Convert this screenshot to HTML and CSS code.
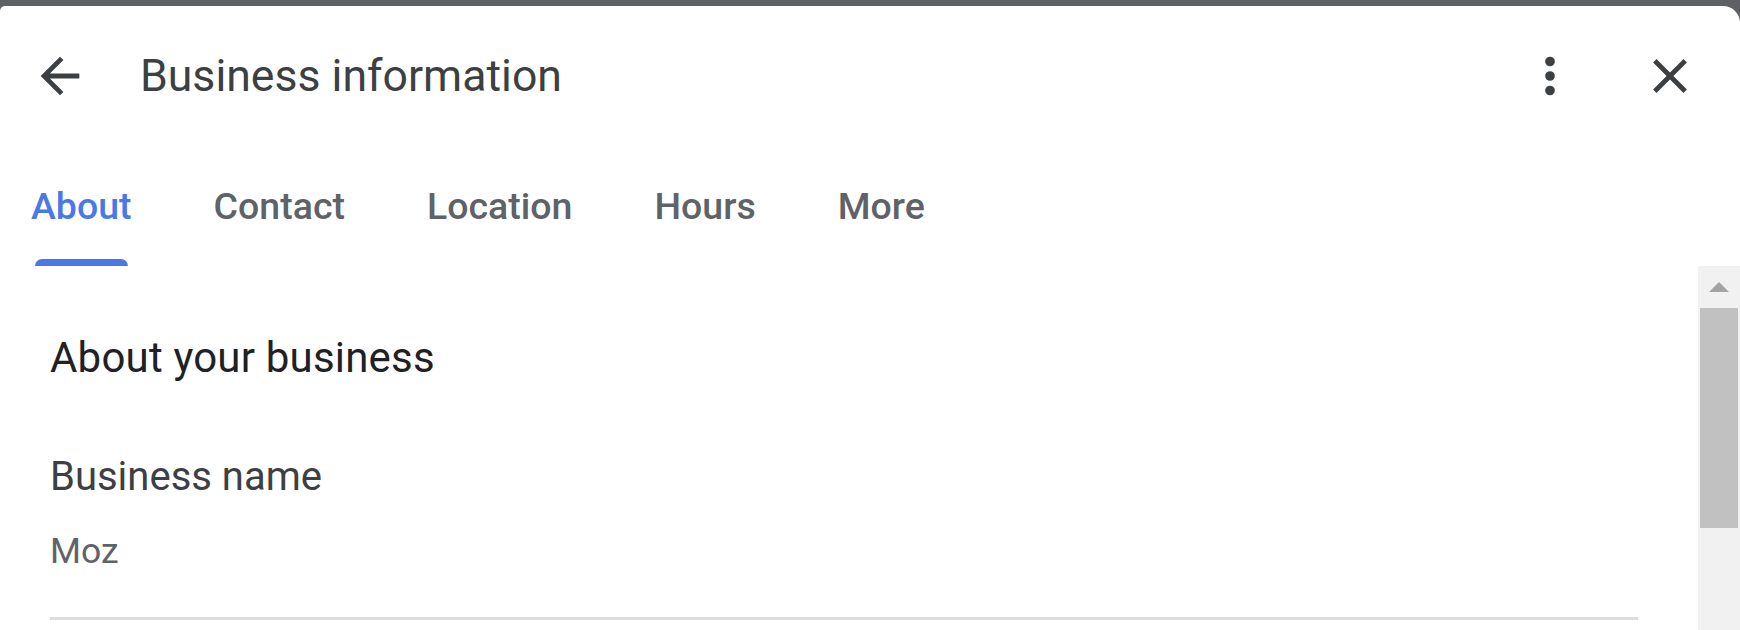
FILE: index.html
```html
<!DOCTYPE html>
<html lang="en">
  <head>
    <meta charset="UTF-8" />
    <meta name="viewport" content="width=device-width, initial-scale=1.0" />
    <title>Business information</title>
    <link rel="stylesheet" href="styles.css">
  </head>
  <body>
    <div class="dialog">
      <div class="header">
        <button class="icon-btn" aria-label="Back">
          <svg viewBox="0 0 24 24"><path d="M20 11H7.83l5.59-5.59L12 4l-8 8 8 8 1.41-1.41L7.83 13H20v-2z"/></svg>
        </button>
        <h1>Business information</h1>
        <div class="header-actions">
          <button class="icon-btn" aria-label="More options">
            <svg viewBox="0 0 24 24"><circle cx="12" cy="6" r="2"/><circle cx="12" cy="12" r="2"/><circle cx="12" cy="18" r="2"/></svg>
          </button>
          <button class="icon-btn" aria-label="Close">
            <svg viewBox="0 0 24 24"><path d="M19 6.41L17.59 5 12 10.59 6.41 5 5 6.41 10.59 12 5 17.59 6.41 19 12 13.41 17.59 19 19 17.59 13.41 12z"/></svg>
          </button>
        </div>
      </div>

      <div class="tabs">
        <div class="tab active">About</div>
        <div class="tab">Contact</div>
        <div class="tab">Location</div>
        <div class="tab">Hours</div>
        <div class="tab">More</div>
      </div>

      <div class="panel">
        <div class="content">
          <h2>About your business</h2>
          <div class="field">
            <div class="field-label">Business name</div>
            <div class="field-value">Moz</div>
          </div>
        </div>
        <div class="scrollbar">
          <div class="scroll-up"></div>
          <div class="scroll-thumb"></div>
        </div>
      </div>
    </div>
  </body>
</html>
```

FILE: styles.css
```css
body {
  margin: 0;
  padding: 0;
  background-color: #5f6064;
  font-family: "Roboto", "Liberation Sans", sans-serif;
  overflow: hidden;
}

.dialog {
  margin-top: 6px;
  height: 624px;
  background: #fff;
  border-radius: 5px 17px 0 0;
  overflow: hidden;
  display: flex;
  flex-direction: column;
}

.header {
  height: 140px;
  display: flex;
  align-items: center;
  padding: 0 41px 0 31px;
}

.header h1 {
  margin: 0 0 0 51px;
  font-size: 44.6px;
  font-weight: 400;
  color: #3c4043;
  flex: 1;
}

.header-actions {
  display: flex;
  gap: 62px;
}

.icon-btn {
  width: 58px;
  height: 58px;
  padding: 0;
  border: none;
  background: none;
  cursor: pointer;
}

.icon-btn svg {
  display: block;
  width: 58px;
  height: 58px;
  fill: #3c4043;
}

.tabs {
  height: 120px;
  display: flex;
  gap: 82px;
  padding-left: 31px;
}

.tab {
  position: relative;
  display: flex;
  align-items: center;
  font-size: 37.5px;
  font-weight: 500;
  color: #5f6368;
  cursor: pointer;
}

.tab.active {
  color: #4a78e8;
}

.tab.active::after {
  content: "";
  position: absolute;
  left: 4px;
  right: 4px;
  bottom: 0;
  height: 7px;
  background: #4a78e8;
  border-radius: 7px 7px 0 0;
}

.panel {
  flex: 1;
  display: flex;
}

.content {
  flex: 1;
  padding: 0 60px 0 50px;
}

.content h2 {
  margin: 68px 0 0;
  font-size: 42px;
  line-height: 48px;
  letter-spacing: 0.2px;
  font-weight: 400;
  color: #202124;
}

.field {
  margin-top: 71px;
  padding-bottom: 45px;
  border-bottom: 3px solid #dadce0;
}

.field-label {
  font-size: 40px;
  color: #3c4043;
}

.field-value {
  margin-top: 30px;
  font-size: 35.5px;
  color: #5f6368;
}

.scrollbar {
  width: 42px;
  background: #f1f1f1;
}

.scroll-up {
  height: 42px;
  display: flex;
  align-items: center;
  justify-content: center;
}

.scroll-up::before {
  content: "";
  border-left: 10px solid transparent;
  border-right: 10px solid transparent;
  border-bottom: 10px solid #a3a3a3;
}

.scroll-thumb {
  margin: 0 2px;
  height: 220px;
  background: #c1c1c1;
}
```
